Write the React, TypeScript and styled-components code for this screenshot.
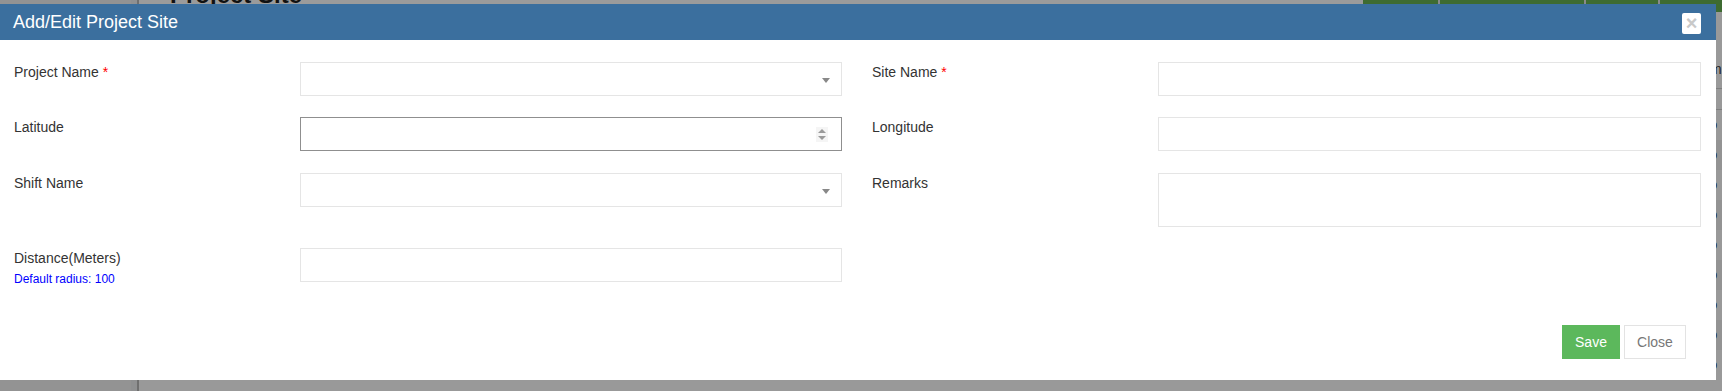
import * as React from 'react';
import styled, { createGlobalStyle } from 'styled-components';

const GlobalStyle = createGlobalStyle`
  html, body {
    margin: 0;
    padding: 0;
    background: #8f9091;
  }
  body {
    font-family: "Liberation Sans", Arial, sans-serif;
  }
  * {
    box-sizing: border-box;
  }
`

const Page = styled.div`
  position: relative;
  width: 1722px;
  height: 391px;
  overflow: hidden;
  display: flex;
  background: #8f9091;
`

const Sidebar = styled.div`
  width: 139px;
  flex-shrink: 0;
  background: #939393;
  border-right: 2px solid #6f6f6f;
  box-shadow: inset -6px 0 0 #8f9091;
`

const Main = styled.div`
  flex: 1;
  display: flex;
  flex-direction: column;
`

const TopBar = styled.div`
  height: 12px;
  display: flex;
  background: #9b9b9b;
`

const PageTitle = styled.div`
  margin: -19px 0 0 31px;
  font-size: 24px;
  font-weight: bold;
  color: #111;
  white-space: nowrap;
`

const Toolbar = styled.div`
  margin-left: auto;
  width: 359px;
  display: flex;
  background: #3e6b31;
`

const ToolButton = styled.div<{ w: number }>`
  width: ${p => p.w}px;
  border-right: 2px solid #8a8a8a;
`

const Table = styled.div`
  flex: 1;
  display: flex;
  flex-direction: column;
  align-items: flex-end;
  padding-top: 38px;
  background: #999;
`

const TableHead = styled.div<{ h: number }>`
  width: 12px;
  height: ${p => p.h}px;
  font-size: 14px;
  line-height: ${p => p.h - 1}px;
  color: #222;
  border-bottom: 1px solid #7f7f7f;
`

const TableRow = styled.div<{ odd?: boolean }>`
  width: 12px;
  height: 30px;
  font-size: 13px;
  line-height: 30px;
  color: #222;
  background: ${p => (p.odd ? '#939393' : '#999')};
  &:first-of-type {
    margin-top: 7px;
  }
`

// ---------- dialog ----------

const Modal = styled.div`
  position: absolute;
  top: 4px;
  left: 0;
  width: 1716px;
  height: 376px;
  background: #fff;
  display: flex;
  flex-direction: column;
`

const ModalHeader = styled.div`
  height: 36px;
  flex-shrink: 0;
  background: #3b6f9e;
  display: flex;
  align-items: center;
  justify-content: space-between;
  padding: 0 15px 0 13px;
`

const ModalTitle = styled.div`
  color: #fff;
  font-size: 18px;
  line-height: 20px;
  margin-top: -1px;
`

const CloseIcon = styled.button`
  width: 19px;
  height: 21px;
  border: none;
  border-radius: 2px;
  background: #fff;
  color: #c9c9c9;
  font-family: "Liberation Sans", Arial, sans-serif;
  font-size: 20px;
  font-weight: bold;
  line-height: 21px;
  padding: 0;
  margin-top: 2px;
  text-align: center;
`

const ModalBody = styled.div`
  padding: 22px 15px 0 14px;
  display: grid;
  grid-template-columns: 286px 542px 30px 286px 543px;
  grid-template-rows: 34px 35px 54px auto;
  row-gap: 21px;
  align-items: start;
`

const Label = styled.div<{ required?: boolean; column?: number }>`
  grid-column: ${p => p.column ?? 1};
  font-size: 14px;
  line-height: 20px;
  color: #333;

  ${p => p.required && `
    &::after {
      content: ' *';
      color: #f00;
    }
  `}
`

const Hint = styled.div`
  font-size: 12px;
  line-height: 16px;
  color: #00f;
  margin-top: 3px;
`

const Control = styled.div<{ column: number; tall?: boolean; focused?: boolean }>`
  grid-column: ${p => p.column};
  height: ${p => (p.tall ? 54 : 34)}px;
  border: 1px solid ${p => (p.focused ? '#8f8f8f' : '#e5e5e5')};
  background: #fff;
  display: flex;
  align-items: center;
  padding-right: 11px;
`

const TextInput = styled.input`
  flex: 1;
  min-width: 0;
  height: 100%;
  border: none;
  outline: none;
  background: transparent;
  padding: 6px 12px;
  font-family: inherit;
  font-size: 14px;
`

const TextArea = styled.textarea`
  flex: 1;
  height: 100%;
  border: none;
  outline: none;
  resize: none;
  background: transparent;
  padding: 6px 12px;
  font-family: inherit;
  font-size: 14px;
`

const Caret = styled.span`
  width: 0;
  height: 0;
  border-left: 4px solid transparent;
  border-right: 4px solid transparent;
  border-top: 5px solid #888;
  margin-top: 2px;
`

const Spinner = styled.span`
  width: 12px;
  height: 15px;
  margin-right: 2px;
  background: #f5f5f5;
  display: flex;
  flex-direction: column;
  align-items: center;
  justify-content: center;
  gap: 3px;
`

const SpinArrow = styled.span<{ up?: boolean }>`
  width: 0;
  height: 0;
  border-left: 4px solid transparent;
  border-right: 4px solid transparent;
  ${p => (p.up ? 'border-bottom: 4px solid #9a9a9a;' : 'border-top: 4px solid #9a9a9a;')}
`

const ModalFooter = styled.div`
  margin-top: auto;
  height: 55px;
  padding: 0 30px 21px 0;
  display: flex;
  justify-content: flex-end;
  gap: 4px;
`

const Button = styled.button<{ primary?: boolean; w: number }>`
  width: ${p => p.w}px;
  height: 34px;
  border: 1px solid ${p => (p.primary ? '#5cb85c' : '#e3e3e3')};
  background: ${p => (p.primary ? '#5cb85c' : '#fff')};
  color: ${p => (p.primary ? '#fff' : '#777')};
  font-family: "Liberation Sans", Arial, sans-serif;
  font-size: 14px;
  padding: 0;
  cursor: pointer;
`

const SelectField = ({ column }: { column: number }) => (
  <Control column={column}>
    <TextInput readOnly />
    <Caret />
  </Control>
);

const App = () => {
  return (
    <>
      <GlobalStyle />
      <Page>
        <Sidebar />
        <Main>
          <TopBar>
            <PageTitle>Project Site</PageTitle>
            <Toolbar>
              <ToolButton w={77} />
              <ToolButton w={146} />
              <ToolButton w={74} />
            </Toolbar>
          </TopBar>
          <Table>
            <TableHead h={39}>m</TableHead>
            <TableHead h={21} />
            {Array.from({ length: 9 }).map((_, i) => (
              <TableRow key={i} odd={i % 2 === 1}>o</TableRow>
            ))}
          </Table>
        </Main>

        <Modal>
          <ModalHeader>
            <ModalTitle>Add/Edit Project Site</ModalTitle>
            <CloseIcon>×</CloseIcon>
          </ModalHeader>

          <ModalBody>
            <Label required>Project Name</Label>
            <SelectField column={2} />
            <Label required column={4}>Site Name</Label>
            <Control column={5}><TextInput /></Control>

            <Label>Latitude</Label>
            <Control column={2} focused>
              <TextInput />
              <Spinner>
                <SpinArrow up />
                <SpinArrow />
              </Spinner>
            </Control>
            <Label column={4}>Longitude</Label>
            <Control column={5}><TextInput /></Control>

            <Label>Shift Name</Label>
            <SelectField column={2} />
            <Label column={4}>Remarks</Label>
            <Control column={5} tall><TextArea /></Control>

            <Label>
              Distance(Meters)
              <Hint>Default radius: 100</Hint>
            </Label>
            <Control column={2}><TextInput /></Control>
          </ModalBody>

          <ModalFooter>
            <Button primary w={58}>Save</Button>
            <Button w={62}>Close</Button>
          </ModalFooter>
        </Modal>
      </Page>
    </>
  );
};

export default App;
